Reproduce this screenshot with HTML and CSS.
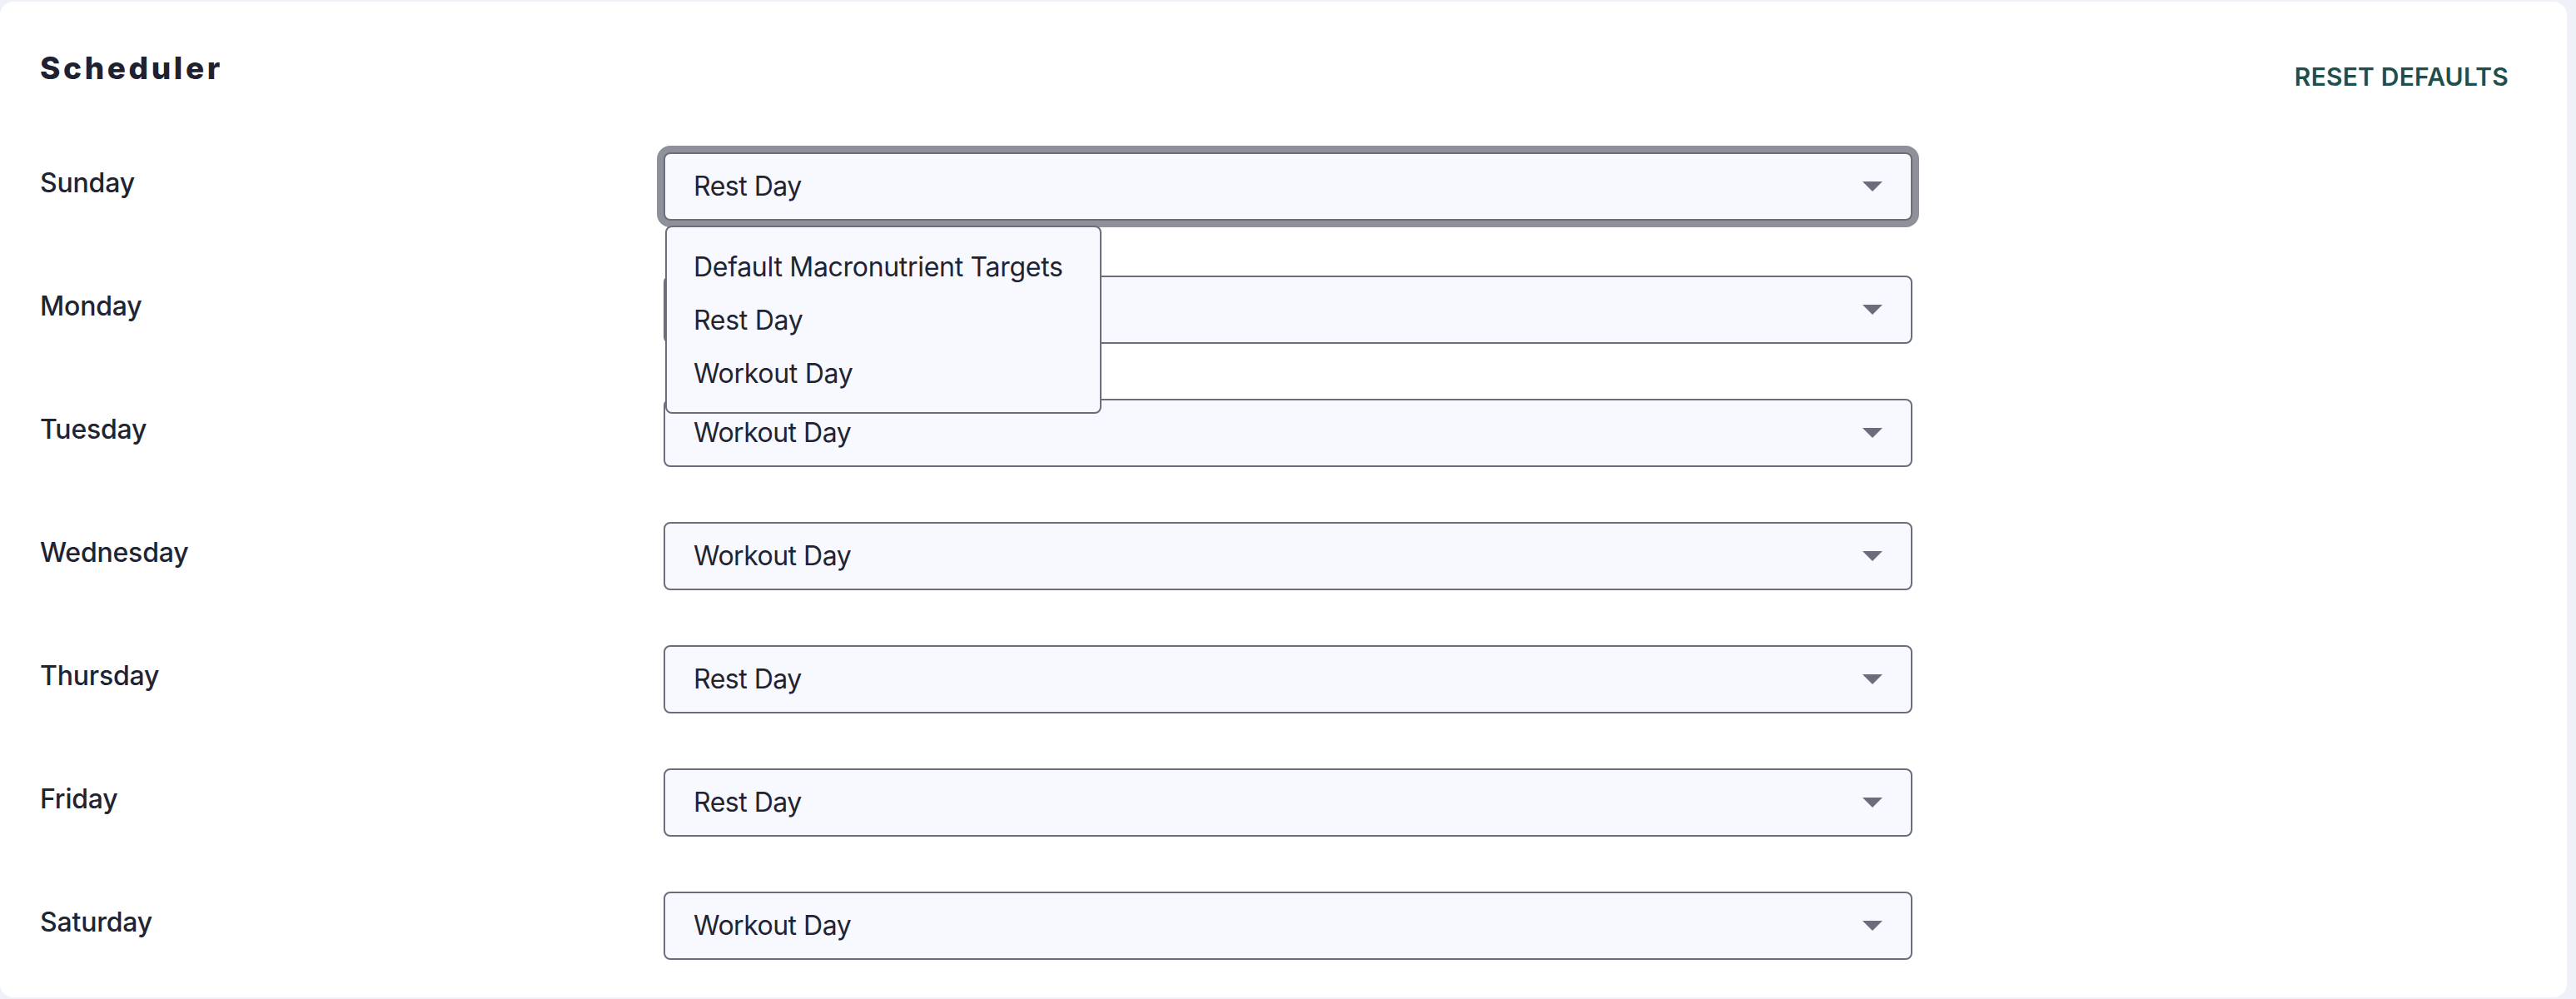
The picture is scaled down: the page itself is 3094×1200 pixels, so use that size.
FILE: index.html
```html
<!DOCTYPE html>
<html lang="en">
<head>
<meta charset="utf-8">
<title>Scheduler</title>
<link rel="stylesheet" href="styles.css">
</head>
<body>
<main class="card">
  <header class="card-header">
    <h2 class="title">Scheduler</h2>
    <button class="reset" type="button">RESET DEFAULTS</button>
  </header>
  <div class="rows">
    <div class="row">
      <div class="label">Sunday</div>
      <div class="select is-open">
        <span class="value">Rest Day</span>
        <span class="caret"></span>
        <ul class="menu">
          <li>Default Macronutrient Targets</li>
          <li>Rest Day</li>
          <li>Workout Day</li>
        </ul>
      </div>
    </div>
    <div class="row">
      <div class="label">Monday</div>
      <div class="select"><span class="value">Rest Day</span><span class="caret"></span></div>
    </div>
    <div class="row">
      <div class="label">Tuesday</div>
      <div class="select"><span class="value">Workout Day</span><span class="caret"></span></div>
    </div>
    <div class="row">
      <div class="label">Wednesday</div>
      <div class="select"><span class="value">Workout Day</span><span class="caret"></span></div>
    </div>
    <div class="row">
      <div class="label">Thursday</div>
      <div class="select"><span class="value">Rest Day</span><span class="caret"></span></div>
    </div>
    <div class="row">
      <div class="label">Friday</div>
      <div class="select"><span class="value">Rest Day</span><span class="caret"></span></div>
    </div>
    <div class="row">
      <div class="label">Saturday</div>
      <div class="select"><span class="value">Workout Day</span><span class="caret"></span></div>
    </div>
  </div>
</main>
</body>
</html>
```
FILE: styles.css
```css
* { box-sizing: border-box; }

html, body {
  margin: 0;
  padding: 0;
}

body {
  background: #eff1f8;
  font-family: Inter, "Noto Sans", "Liberation Sans", sans-serif;
  color: #1f2433;
  padding: 2px 11px 2px 0;
  height: 1200px;
  overflow: hidden;
}

.card {
  background: #ffffff;
  border-radius: 16px;
  height: 1196px;
  padding: 58px 48px 0 48px;
}

.card-header {
  display: flex;
  justify-content: space-between;
  align-items: flex-start;
  height: 59px;
}

.title {
  margin: 0;
  font-size: 37px;
  line-height: 44px;
  font-weight: 800;
  letter-spacing: 3.6px;
  color: #1e2230;
}

.reset {
  margin: 6px 0 0 0;
  padding: 8px 22px;
  border: 0;
  background: transparent;
  font-family: Inter, "Noto Sans", "Liberation Sans", sans-serif;
  font-size: 30px;
  line-height: 36px;
  font-weight: 600;
  color: #1e4f4c;
  letter-spacing: 0.2px;
}

.rows {
  margin-top: 64px;
  display: grid;
  grid-template-columns: 749px 1500px;
  row-gap: 66px;
}

.row {
  display: contents;
}

.label {
  padding-top: 13px;
  font-size: 32px;
  line-height: 48px;
  font-weight: 500;
  letter-spacing: -0.2px;
  color: #1f2433;
}

.select {
  position: relative;
  height: 82px;
  border: 2px solid #6c6f7b;
  border-radius: 8px;
  background: #f8f9fe;
  display: flex;
  align-items: center;
  justify-content: space-between;
  padding: 0 34px 0 34px;
  font-size: 32px;
  line-height: 48px;
  color: #1f2433;
}

.value {
  letter-spacing: -0.5px;
}

.select.is-open {
  box-shadow: 0 0 0 8px #8e9199;
}

.caret {
  width: 0;
  height: 0;
  border-left: 12px solid transparent;
  border-right: 12px solid transparent;
  border-top: 12px solid #6b6e7a;
}

.menu {
  position: absolute;
  left: 0;
  top: 86px;
  width: 524px;
  margin: 0;
  padding: 16px 0 14px 0;
  list-style: none;
  background: #f8f9fe;
  border: 2px solid #6c6f7b;
  border-radius: 8px;
  z-index: 2;
}

.menu li {
  padding: 0 32px;
  height: 64px;
  line-height: 64px;
  font-size: 32px;
  letter-spacing: -0.3px;
  white-space: nowrap;
}
```
